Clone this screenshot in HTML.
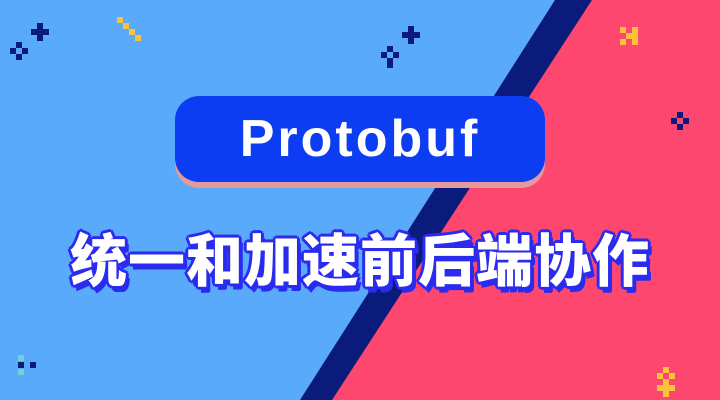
<!DOCTYPE html>
<html><head><meta charset="utf-8"><style>
html,body{margin:0;padding:0}
body{width:720px;height:400px;overflow:hidden;position:relative;background:#5aaafc;font-family:"Liberation Sans","Noto Sans CJK SC",sans-serif}
svg{position:absolute;left:0;top:0}
.pill{position:absolute;left:175px;top:96px;width:370px;height:86px;border-radius:24px;background:#0d3df2;box-shadow:0 6px 0 #e39a9e}
.pill span{position:absolute;left:0;right:0;top:0;line-height:86px;text-align:center;color:#fff;font-weight:bold;font-size:52px;letter-spacing:3px}
.cn{position:absolute;left:60px;width:600px;top:222px;text-align:center;color:#fff;font-family:"Noto Sans CJK SC",sans-serif;font-weight:900;font-size:57px;line-height:70px;letter-spacing:1px;
text-shadow:2px 2px 0 #2b2bf0,-2px -2px 0 #2b2bf0,2px -2px 0 #2b2bf0,-2px 2px 0 #2b2bf0,0 3px 0 #2b2bf0,3px 0 0 #2b2bf0,-3px 0 0 #2b2bf0,0 -3px 0 #2b2bf0,4px 5px 0 #2b2bf0,3px 6px 0 #2b2bf0}
</style></head><body>
<svg width="720" height="400">
<polygon points="555,0 720,0 720,400 300,400" fill="#0b1b7c"/>
<polygon points="592,0 720,0 720,400 332,400" fill="#fe476f"/>
<g fill="#0b1b7c">
<rect x="37" y="23" width="6" height="18"/><rect x="31" y="29" width="18" height="6"/>
<rect x="16" y="42" width="6" height="6"/><rect x="10" y="48" width="6" height="6"/><rect x="22" y="48" width="6" height="6"/><rect x="16" y="54" width="6" height="6"/>
<rect x="408" y="26" width="6" height="18"/><rect x="402" y="32" width="18" height="6"/>
<rect x="387" y="46" width="6" height="6"/><rect x="381" y="52" width="6" height="6"/><rect x="393" y="52" width="6" height="6"/><rect x="387" y="58" width="6" height="6"/><rect x="387" y="64" width="6" height="4"/>
<rect x="677" y="112" width="6" height="6"/><rect x="671" y="118" width="6" height="6"/><rect x="683" y="118" width="6" height="6"/><rect x="677" y="124" width="6" height="6"/>
<rect x="18" y="362" width="6" height="6"/><rect x="30" y="362" width="6" height="6"/>
</g>
<g fill="#f8c23a">
<rect x="117" y="17" width="6" height="6"/><rect x="123" y="23" width="6" height="6"/><rect x="129" y="29" width="6" height="6"/><rect x="135" y="35" width="6" height="6"/>
<rect x="620" y="27" width="6" height="6"/><rect x="632" y="27" width="6" height="6"/><rect x="626" y="33" width="12" height="6"/><rect x="620" y="39" width="6" height="6"/><rect x="632" y="39" width="6" height="6"/>
<rect x="663" y="367" width="6" height="6"/><rect x="657" y="373" width="6" height="6"/><rect x="669" y="373" width="6" height="6"/><rect x="663" y="379" width="6" height="6"/><rect x="663" y="391" width="6" height="6"/><rect x="657" y="385" width="18" height="6"/>
</g>
<g fill="#6fd3d3"><rect x="18" y="355" width="6" height="6"/><rect x="18" y="369" width="6" height="6"/></g>
</svg>
<div class="pill"><span>Protobuf</span></div>
<div class="cn">统一和加速前后端协作</div>
</body></html>
